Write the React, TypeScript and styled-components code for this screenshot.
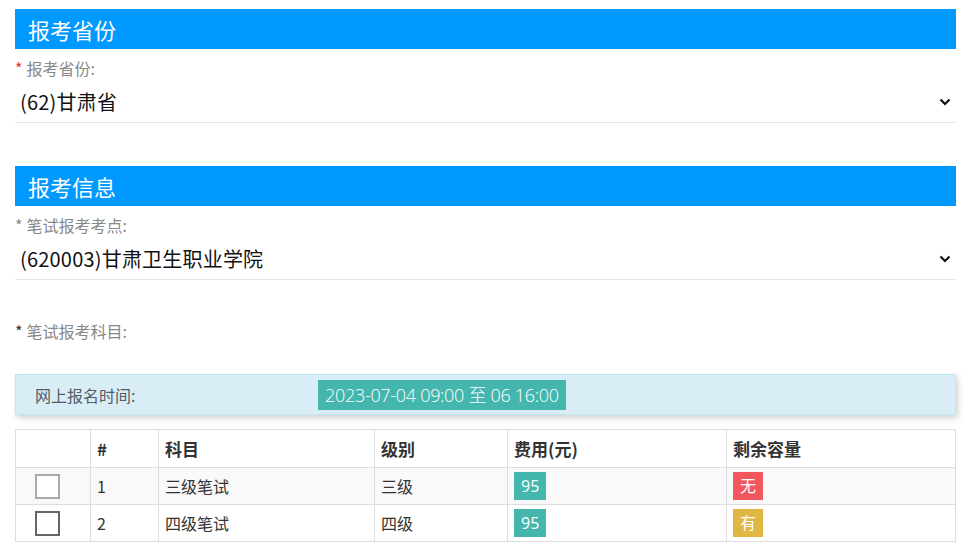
import React from "react";
import styled, { createGlobalStyle } from "styled-components";

const Global = createGlobalStyle`
  html, body { margin: 0; padding: 0; background: #fff; }
  body { font-family: "Open Sans", "Noto Sans CJK SC", sans-serif; color: #333; }
`;

const Page = styled.div`
  width: 941px;
  padding: 9px 13px 0 15px;
`;

const SectionTitle = styled.div<{ $mt?: number }>`
  height: 40px;
  background: #0099ff;
  color: #fff;
  font-size: 22px;
  line-height: 40px;
  padding-left: 13px;
  margin-top: ${(p) => p.$mt ?? 0}px;
  font-family: "Noto Sans CJK SC", sans-serif;
`;

const Label = styled.div<{ $mt?: number }>`
  font-size: 16px;
  color: #888;
  height: 20px;
  line-height: 20px;
  margin-top: ${(p) => p.$mt ?? 9}px;
  font-family: "Noto Sans CJK SC", sans-serif;
`;

const Star = styled.span<{ $color: string }>`
  color: ${(p) => p.$color};
  margin-right: 4px;
`;

const Select = styled.div`
  display: flex;
  align-items: center;
  justify-content: space-between;
  height: 41px;
  margin-top: 3px;
  padding: 0 5px;
  border-bottom: 1px solid #e5e5e5;
  font-size: 20px;
  letter-spacing: 0.2px;
  color: #111;
  font-family: "Noto Sans CJK SC", sans-serif;
`;

const Chevron = () => (
  <svg width="12" height="8" viewBox="0 0 12 8">
    <path d="M1.5 1.5 L6 6 L10.5 1.5" fill="none" stroke="#111" strokeWidth="2.2" />
  </svg>
);

const InfoBox = styled.div`
  margin-top: 33px;
  height: 39px;
  display: flex;
  align-items: center;
  background: #d9edf7;
  border: 1px solid #bce8f1;
  box-shadow: 2px 3px 6px rgba(0, 0, 0, 0.18);
  padding-left: 19px;
`;

const InfoLabel = styled.span`
  width: 283px;
  font-size: 16px;
  color: #555c66;
  font-family: "Noto Sans CJK SC", sans-serif;
`;

const TimeBadge = styled.span`
  background: #45b6ae;
  color: #fff;
  font-size: 18px;
  font-weight: 300;
  letter-spacing: -0.3px;
  height: 30px;
  line-height: 30px;
  padding: 0 7px;
  font-family: "Open Sans", "Noto Sans CJK SC", sans-serif;
`;

const Table = styled.table`
  margin-top: 14px;
  width: 941px;
  border-collapse: collapse;
  font-family: "Noto Sans CJK SC", sans-serif;
  font-size: 16px;
  color: #333;
`;

const Th = styled.th<{ $w: number }>`
  width: ${(p) => p.$w}px;
  border: 1px solid #ddd;
  text-align: left;
  font-weight: 700;
  font-size: 17px;
  height: 37px;
  padding: 0 6px;
`;

const Tr = styled.tr<{ $striped?: boolean }>`
  background: ${(p) => (p.$striped ? "#f9f9f9" : "#fff")};
`;

const Td = styled.td<{ $check?: boolean }>`
  border: 1px solid #ddd;
  height: 36px;
  padding: ${(p) => (p.$check ? "0 0 0 19px" : "0 6px")};
  text-align: left;
  vertical-align: middle;
`;

const Check = styled.span<{ $disabled?: boolean }>`
  display: block;
  width: 21px;
  height: 21px;
  border: 2px solid ${(p) => (p.$disabled ? "#aaa" : "#666")};
  background: #fff;
`;

const Badge = styled.span<{ $bg: string }>`
  display: inline-block;
  background: ${(p) => p.$bg};
  color: #fff;
  height: 28px;
  line-height: 28px;
  padding: 0 7px;
  font-size: 16px;
  font-family: "Open Sans", "Noto Sans CJK SC", sans-serif;
`;

const rows = [
  { n: 1, subject: "三级笔试", level: "三级", fee: "95", cap: "无", capColor: "#f2565f", disabled: true },
  { n: 2, subject: "四级笔试", level: "四级", fee: "95", cap: "有", capColor: "#e1b744", disabled: false },
];

export default function App() {
  return (
    <Page>
      <Global />
      <SectionTitle>报考省份</SectionTitle>
      <Label>
        <Star $color="#e33">*</Star>报考省份:
      </Label>
      <Select>
        <span>(62)甘肃省</span>
        <Chevron />
      </Select>

      <SectionTitle $mt={43}>报考信息</SectionTitle>
      <Label>
        <Star $color="#888">*</Star>笔试报考考点:
      </Label>
      <Select>
        <span>(620003)甘肃卫生职业学院</span>
        <Chevron />
      </Select>

      <Label $mt={41}>
        <Star $color="#333">*</Star>笔试报考科目:
      </Label>

      <InfoBox>
        <InfoLabel>网上报名时间:</InfoLabel>
        <TimeBadge>2023-07-04 09:00 至 06 16:00</TimeBadge>
      </InfoBox>

      <Table>
        <thead>
          <tr>
            <Th $w={62}></Th>
            <Th $w={55}>#</Th>
            <Th $w={203}>科目</Th>
            <Th $w={120}>级别</Th>
            <Th $w={206}>费用(元)</Th>
            <Th $w={216}>剩余容量</Th>
          </tr>
        </thead>
        <tbody>
          {rows.map((r, i) => (
            <Tr key={r.n} $striped={i % 2 === 0}>
              <Td $check>
                <Check $disabled={r.disabled} />
              </Td>
              <Td>{r.n}</Td>
              <Td>{r.subject}</Td>
              <Td>{r.level}</Td>
              <Td>
                <Badge $bg="#45b6ae">{r.fee}</Badge>
              </Td>
              <Td>
                <Badge $bg={r.capColor}>{r.cap}</Badge>
              </Td>
            </Tr>
          ))}
        </tbody>
      </Table>
    </Page>
  );
}
